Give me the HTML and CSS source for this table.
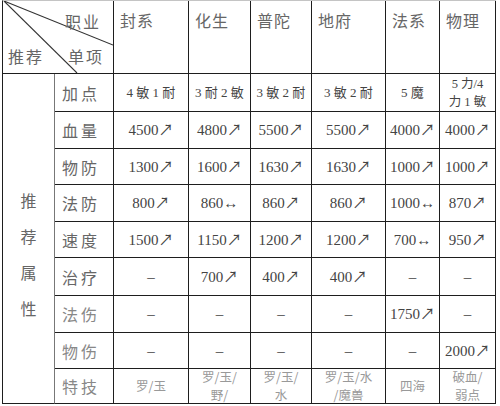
FILE: index.html
```html
<!DOCTYPE html>
<html lang="zh">
<head>
<meta charset="utf-8">
<link rel="stylesheet" href="styles.css">
</head>
<body>
<div class="grid" role="table">
  <div class="cell corner">
    <svg class="diag" viewBox="0 0 110 72" preserveAspectRatio="none">
      <line x1="1" y1="0" x2="110" y2="44"/>
      <line x1="1" y1="0" x2="74" y2="72"/>
    </svg>
    <span class="lab lab-job">职业</span>
    <span class="lab lab-item">单项</span>
    <span class="lab lab-rec">推荐</span>
  </div>
  <div class="cell sect">封系</div>
  <div class="cell sect">化生</div>
  <div class="cell sect">普陀</div>
  <div class="cell sect">地府</div>
  <div class="cell sect">法系</div>
  <div class="cell sect">物理</div>

  <div class="cell group"><span class="vert">推<br>荐<br>属<br>性</span></div>

  <div class="cell item">加点</div>
  <div class="cell val cjk-mix">4 敏 1 耐</div>
  <div class="cell val cjk-mix">3 耐 2 敏</div>
  <div class="cell val cjk-mix">3 敏 2 耐</div>
  <div class="cell val cjk-mix">3 敏 2 耐</div>
  <div class="cell val cjk-mix">5 魔</div>
  <div class="cell val small"><span>5 力/4</span><span>力 1 敏</span></div>

  <div class="cell item">血量</div>
  <div class="cell val">4500↗</div><div class="cell val">4800↗</div><div class="cell val">5500↗</div><div class="cell val">5500↗</div><div class="cell val">4000↗</div><div class="cell val">4000↗</div>

  <div class="cell item">物防</div>
  <div class="cell val">1300↗</div><div class="cell val">1600↗</div><div class="cell val">1630↗</div><div class="cell val">1630↗</div><div class="cell val">1000↗</div><div class="cell val">1000↗</div>

  <div class="cell item">法防</div>
  <div class="cell val">800↗</div><div class="cell val">860↔</div><div class="cell val">860↗</div><div class="cell val">860↗</div><div class="cell val">1000↔</div><div class="cell val">870↗</div>

  <div class="cell item">速度</div>
  <div class="cell val">1500↗</div><div class="cell val">1150↗</div><div class="cell val">1200↗</div><div class="cell val">1200↗</div><div class="cell val">700↔</div><div class="cell val">950↗</div>

  <div class="cell item">治疗</div>
  <div class="cell val">–</div><div class="cell val">700↗</div><div class="cell val">400↗</div><div class="cell val">400↗</div><div class="cell val">–</div><div class="cell val">–</div>

  <div class="cell item faded">法伤</div>
  <div class="cell val">–</div><div class="cell val">–</div><div class="cell val">–</div><div class="cell val">–</div><div class="cell val">1750↗</div><div class="cell val">–</div>

  <div class="cell item faded">物伤</div>
  <div class="cell val">–</div><div class="cell val">–</div><div class="cell val">–</div><div class="cell val">–</div><div class="cell val">–</div><div class="cell val">2000↗</div>

  <div class="cell item faded">特技</div>
  <div class="cell val skill"><span>罗/玉</span></div>
  <div class="cell val skill"><span>罗/玉/</span><span>野/</span></div>
  <div class="cell val skill"><span>罗/玉/</span><span>水</span></div>
  <div class="cell val skill"><span>罗/玉/水</span><span>/魔兽</span></div>
  <div class="cell val skill"><span>四海</span></div>
  <div class="cell val skill"><span>破血/</span><span>弱点</span></div>
</div>
</body>
</html>
```

FILE: styles.css
```css
html, body {
  margin: 0;
  padding: 0;
  background: #ffffff;
}

body {
  width: 500px;
  height: 406px;
  overflow: hidden;
  font-family: "Liberation Serif", "Noto Sans CJK SC", serif;
  color: #444;
}

.grid {
  margin-left: 2px;
  width: 494px;
  display: grid;
  grid-template-columns: 52px 59px 75px 62px 61px 74px 54px 56px;
  grid-template-rows: 73px 38px 37px 36px 37px 36px 38px 37px 36px 35px;
  border-left: 1px solid #1e1e1e;
  border-top: 1px solid #c4c4c4;
  box-sizing: border-box;
}

.cell {
  box-sizing: border-box;
  border-right: 1px solid #1e1e1e;
  border-bottom: 1px solid #1e1e1e;
  min-width: 0;
}

.corner {
  grid-column: 1 / span 2;
  position: relative;
}

.diag {
  position: absolute;
  left: 0;
  top: 0;
  width: 110px;
  height: 72px;
}

.diag line {
  stroke: #333;
  stroke-width: 1.1;
}

.lab {
  position: absolute;
  font-family: "Noto Sans CJK SC", sans-serif;
  font-size: 16px;
  line-height: 18px;
  letter-spacing: 2px;
  color: #666;
}

.lab-job { left: 62px; top: 11px; }
.lab-item { left: 65px; top: 46px; }
.lab-rec { left: 5px; top: 46px; }

.sect {
  padding: 9px 0 0 6px;
  font-family: "Noto Sans CJK SC", sans-serif;
  font-size: 16px;
  line-height: 20px;
  letter-spacing: 1px;
  color: #666;
}

.group {
  grid-column: 1;
  grid-row: 2 / span 9;
  border-right-color: #777;
  display: flex;
  justify-content: center;
  padding-top: 108px;
}

.vert {
  font-family: "Noto Sans CJK SC", sans-serif;
  font-size: 16px;
  line-height: 36px;
  color: #666;
}

.item {
  display: flex;
  align-items: center;
  padding-left: 7px;
  font-family: "Noto Sans CJK SC", sans-serif;
  font-size: 16px;
  letter-spacing: 3px;
  color: #666;
}

.item.faded {
  color: #888;
}

.val {
  display: flex;
  align-items: center;
  justify-content: center;
  text-align: center;
  font-size: 15px;
  line-height: 16px;
  color: #444;
}

.cjk-mix {
  font-size: 13px;
  white-space: pre;
}

.small,
.skill {
  flex-direction: column;
  gap: 2px;
  font-size: 12.5px;
  line-height: 16px;
}

.small span,
.skill span {
  display: block;
  white-space: nowrap;
}

.skill {
  font-family: "Noto Sans CJK SC", sans-serif;
  color: #999;
}
```
